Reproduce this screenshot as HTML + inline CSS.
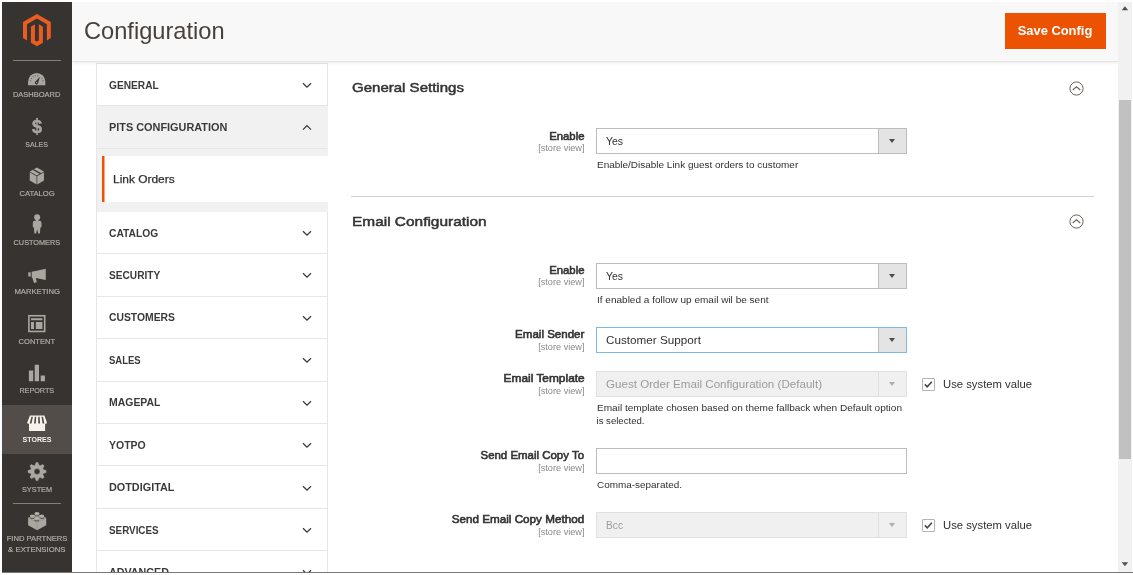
<!DOCTYPE html>
<html lang="en">
<head>
<meta charset="utf-8">
<title>Configuration</title>
<style>
*{box-sizing:border-box;margin:0;padding:0}
html,body{width:1133px;height:575px;overflow:hidden;background:#fff}
body{font-family:"Liberation Sans",sans-serif;color:#303030;position:relative}
.abs{position:absolute;white-space:nowrap}
#frame{position:absolute;left:2px;top:2px;width:1129.9px;height:570px;overflow:hidden;background:#fff;will-change:transform}
#bottomline{position:absolute;left:2px;top:572px;width:1131px;height:1px;background:#777}
#menu{position:absolute;left:0;top:0;width:70px;height:570px;background:#373330}
.msep{position:absolute;left:11px;width:48px;height:1px;background:#857f79}
.mi{position:absolute;left:0;width:70px;height:49px}
.mi.act{background:#524d49}
.ml{position:absolute;left:0;width:70px;text-align:center;font-size:7.8px;color:#b0aca6;line-height:10px;white-space:nowrap;-webkit-text-stroke:.2px #b0aca6}
.ml.act{color:#f7f3eb;font-weight:700;-webkit-text-stroke:0}
#hdr{position:absolute;left:70px;top:0;width:1046px;height:60px;background:#f8f8f8;border-bottom:1px solid #e6e6e6;box-shadow:0 1px 3px rgba(0,0,0,.09)}
#title{left:82px;top:15.4px;font-size:23.2px;line-height:28px;color:#4a403a}
#save{position:absolute;left:1003px;top:11px;width:101px;height:36px;background:#eb5202;color:#fff;font-weight:700;font-size:12.8px;line-height:36px;text-align:center;padding-right:1.8px}
#tabs{position:absolute;left:93.6px;top:60.8px;width:232.4px;height:520px;border:1px solid #e6e6e6;border-bottom:0;background:#fff}
.tab{position:absolute;left:0;width:230.4px;height:42.45px;border-bottom:1px solid #e6e6e6}
.tab b{position:absolute;left:12.3px;top:.8px;line-height:41px;font-size:11.2px;font-weight:700;color:#3a3a3a;white-space:nowrap}
.tab svg{position:absolute;left:205.4px;top:18.1px}
.tabact{background:#f1f1f1}
#lo{position:absolute;left:5.4px;top:91.9px;width:228px;height:46px;background:#fff}
#lo svg{position:absolute;left:0;top:0}
#lo>span{position:absolute;left:11.3px;top:0;line-height:46px;font-size:11.2px;color:#303030;white-space:nowrap;-webkit-text-stroke:.25px #303030}
.h2{font-size:13.6px;font-weight:400;color:#333;line-height:18px;-webkit-text-stroke:.5px #333}
.hr{position:absolute;left:349px;width:743px;height:1px;background:#d2d2d2}
.lbl{position:absolute;right:547.6px;text-align:right;white-space:nowrap;font-size:11.4px;font-weight:400;line-height:14px;color:#333;-webkit-text-stroke:.6px #333}
.sv{position:absolute;right:547.6px;text-align:right;white-space:nowrap;font-size:8.8px;line-height:10px;color:#8a8a8a}
.sel{position:absolute;left:594px;width:311px;height:26px;border:1px solid #bcbcbc;background:#fff;font-size:11.2px;line-height:25px;padding-left:9px;color:#303030;white-space:nowrap}
.sel i{position:absolute;right:0;top:0;width:28px;height:24px;background:#e4e4e4;border-left:1px solid #bcbcbc}
.sel i:after{content:"";position:absolute;left:10px;top:10px;border:3.5px solid transparent;border-top:4.5px solid #514943;border-bottom:0}
.sel.foc{border-color:#7ab9ec}
.sel.dis{background:#f0f0f0;border-color:#e0e0e0;color:#9b9b9b}
.sel.dis i{background:#f0f0f0;border-left-color:#e0e0e0}
.sel.dis i:after{border-top-color:#b0adaa}
.note{position:absolute;left:594.5px;font-size:9.6px;line-height:13px;color:#303030;white-space:nowrap}
.cb{position:absolute;left:920px;width:13px;height:13px;border:1px solid #b4b4b4;border-radius:1px;background:#fff}
.cb svg{position:absolute;left:0;top:0}
.cbl{position:absolute;left:940.5px;font-size:11.2px;line-height:14px;color:#303030;white-space:nowrap}
.col{position:absolute;left:1066.7px;width:15px;height:15px}
#sb{position:absolute;left:1116.2px;top:0;width:13.7px;height:570px;background:#f1f1f1}
#sb .th{position:absolute;left:.7px;top:97.6px;width:12.5px;height:359px;background:#c1c1c1}
#sb svg{position:absolute;left:0;top:0}
</style>
</head>
<body>
<div id="frame">
  <div id="tabs">
    <div class="tabact" style="position:absolute;left:0;top:42.45px;width:231px;height:105.55px"></div>
    <div class="tab" style="top:0.00px"><b><span style="display:inline-block;transform:scaleX(0.9085);transform-origin:left center">GENERAL</span></b><svg width="10" height="7" viewBox="0 0 10 7"><path d="M1 1.2 L5 5.2 L9 1.2" fill="none" stroke="#41362f" stroke-width="1.3"/></svg></div>
    <div class="tab" style="top:42.45px"><b><span style="display:inline-block;transform:scaleX(0.9728);transform-origin:left center">PITS CONFIGURATION</span></b><svg width="10" height="7" viewBox="0 0 10 7"><path d="M1 5.6 L5 1.6 L9 5.6" fill="none" stroke="#41362f" stroke-width="1.3"/></svg></div>
    <div class="tab" style="top:148.00px"><b><span style="display:inline-block;transform:scaleX(0.9188);transform-origin:left center">CATALOG</span></b><svg width="10" height="7" viewBox="0 0 10 7"><path d="M1 1.2 L5 5.2 L9 1.2" fill="none" stroke="#41362f" stroke-width="1.3"/></svg></div>
    <div class="tab" style="top:190.45px"><b><span style="display:inline-block;transform:scaleX(0.9049);transform-origin:left center">SECURITY</span></b><svg width="10" height="7" viewBox="0 0 10 7"><path d="M1 1.2 L5 5.2 L9 1.2" fill="none" stroke="#41362f" stroke-width="1.3"/></svg></div>
    <div class="tab" style="top:232.90px"><b><span style="display:inline-block;transform:scaleX(0.9259);transform-origin:left center">CUSTOMERS</span></b><svg width="10" height="7" viewBox="0 0 10 7"><path d="M1 1.2 L5 5.2 L9 1.2" fill="none" stroke="#41362f" stroke-width="1.3"/></svg></div>
    <div class="tab" style="top:275.35px"><b><span style="display:inline-block;transform:scaleX(0.8496);transform-origin:left center">SALES</span></b><svg width="10" height="7" viewBox="0 0 10 7"><path d="M1 1.2 L5 5.2 L9 1.2" fill="none" stroke="#41362f" stroke-width="1.3"/></svg></div>
    <div class="tab" style="top:317.80px"><b><span style="display:inline-block;transform:scaleX(0.9345);transform-origin:left center">MAGEPAL</span></b><svg width="10" height="7" viewBox="0 0 10 7"><path d="M1 1.2 L5 5.2 L9 1.2" fill="none" stroke="#41362f" stroke-width="1.3"/></svg></div>
    <div class="tab" style="top:360.25px"><b><span style="display:inline-block;transform:scaleX(0.9369);transform-origin:left center">YOTPO</span></b><svg width="10" height="7" viewBox="0 0 10 7"><path d="M1 1.2 L5 5.2 L9 1.2" fill="none" stroke="#41362f" stroke-width="1.3"/></svg></div>
    <div class="tab" style="top:402.70px"><b><span style="display:inline-block;transform:scaleX(0.9684);transform-origin:left center">DOTDIGITAL</span></b><svg width="10" height="7" viewBox="0 0 10 7"><path d="M1 1.2 L5 5.2 L9 1.2" fill="none" stroke="#41362f" stroke-width="1.3"/></svg></div>
    <div class="tab" style="top:445.15px"><b><span style="display:inline-block;transform:scaleX(0.8798);transform-origin:left center">SERVICES</span></b><svg width="10" height="7" viewBox="0 0 10 7"><path d="M1 1.2 L5 5.2 L9 1.2" fill="none" stroke="#41362f" stroke-width="1.3"/></svg></div>
    <div class="tab" style="top:487.60px"><b><span style="display:inline-block;transform:scaleX(0.9588);transform-origin:left center">ADVANCED</span></b><svg width="10" height="7" viewBox="0 0 10 7"><path d="M1 1.2 L5 5.2 L9 1.2" fill="none" stroke="#41362f" stroke-width="1.3"/></svg></div>
    <div id="lo"><svg width="4" height="46" viewBox="0 0 4 46"><rect x="0" y="0" width="2.5" height="46" fill="#eb5202"/></svg><span><span style="display:inline-block;transform:scaleX(1.0652);transform-origin:left center">Link Orders</span></span></div>
  </div>
  <div id="main">
    <div class="abs h2" style="left:349.7px;top:77px"><span style="display:inline-block;transform:scaleX(1.1050);transform-origin:left center">General Settings</span></div>
    <svg class="col" style="top:78.8px" viewBox="0 0 15 15"><circle cx="7.5" cy="7.5" r="6.6" fill="#fff" stroke="#6a635d" stroke-width="1"/><path d="M3.7 9 L7.5 5.8 L11.3 9" fill="none" stroke="#6a635d" stroke-width="1.1"/></svg>
    <div class="lbl" style="top:126.5px"><span style="display:inline-block;transform:scaleX(0.9952);transform-origin:right center">Enable</span></div>
    <div class="sv" style="top:140.9px"><span style="display:inline-block;transform:scaleX(1.0404);transform-origin:right center">[store view]</span></div>
    <div class="sel " style="top:126.3px"><span style="display:inline-block;transform:scaleX(0.9315);transform-origin:left center">Yes</span><i></i></div>
    <div class="note" style="top:156.3px"><span style="display:inline-block;transform:scaleX(1.0394);transform-origin:left center">Enable/Disable Link guest orders to customer</span></div>
    <div class="hr" style="top:194px"></div>
    <div class="abs h2" style="left:349.7px;top:210.5px"><span style="display:inline-block;transform:scaleX(1.1345);transform-origin:left center">Email Configuration</span></div>
    <svg class="col" style="top:211.8px" viewBox="0 0 15 15"><circle cx="7.5" cy="7.5" r="6.6" fill="#fff" stroke="#6a635d" stroke-width="1"/><path d="M3.7 9 L7.5 5.8 L11.3 9" fill="none" stroke="#6a635d" stroke-width="1.1"/></svg>
    <div class="lbl" style="top:261.0px"><span style="display:inline-block;transform:scaleX(0.9952);transform-origin:right center">Enable</span></div>
    <div class="sv" style="top:275.4px"><span style="display:inline-block;transform:scaleX(1.0404);transform-origin:right center">[store view]</span></div>
    <div class="sel " style="top:260.8px"><span style="display:inline-block;transform:scaleX(0.9315);transform-origin:left center">Yes</span><i></i></div>
    <div class="note" style="top:290.8px"><span style="display:inline-block;transform:scaleX(1.0440);transform-origin:left center">If enabled a follow up email wil be sent</span></div>
    <div class="lbl" style="top:325.1px"><span style="display:inline-block;transform:scaleX(1.0133);transform-origin:right center">Email Sender</span></div>
    <div class="sv" style="top:339.5px"><span style="display:inline-block;transform:scaleX(1.0404);transform-origin:right center">[store view]</span></div>
    <div class="sel foc" style="top:324.9px"><span style="display:inline-block;transform:scaleX(1.0463);transform-origin:left center">Customer Support</span><i></i></div>
    <div class="lbl" style="top:369.2px"><span style="display:inline-block;transform:scaleX(1.0441);transform-origin:right center">Email Template</span></div>
    <div class="sv" style="top:383.6px"><span style="display:inline-block;transform:scaleX(1.0404);transform-origin:right center">[store view]</span></div>
    <div class="sel dis" style="top:369.0px"><span style="display:inline-block;transform:scaleX(1.0370);transform-origin:left center">Guest Order Email Configuration (Default)</span><i></i></div>
    <div class="note" style="top:399.0px"><span style="display:inline-block;transform:scaleX(1.0474);transform-origin:left center">Email template chosen based on theme fallback when Default option</span></div>
    <div class="note" style="top:412.2px"><span style="display:inline-block;transform:scaleX(1.0000);transform-origin:left center">is selected.</span></div>
    <div class="cb" style="top:376.0px"><svg width="10.5" height="10.5" viewBox="0 0 10 10"><path d="M1.8 5.2 L4 7.4 L8.4 2.6" fill="none" stroke="#514943" stroke-width="1.6"/></svg></div>
    <div class="cbl" style="top:375.0px"><span style="display:inline-block;transform:scaleX(1.0091);transform-origin:left center">Use system value</span></div>
    <div class="lbl" style="top:446.4px"><span style="display:inline-block;transform:scaleX(1.0049);transform-origin:right center">Send Email Copy To</span></div>
    <div class="sv" style="top:460.8px"><span style="display:inline-block;transform:scaleX(1.0404);transform-origin:right center">[store view]</span></div>
    <div class="sel inp" style="top:446.2px"></div>
    <div class="note" style="top:476.2px"><span style="display:inline-block;transform:scaleX(1.0350);transform-origin:left center">Comma-separated.</span></div>
    <div class="lbl" style="top:510.4px"><span style="display:inline-block;transform:scaleX(1.0258);transform-origin:right center">Send Email Copy Method</span></div>
    <div class="sv" style="top:524.8px"><span style="display:inline-block;transform:scaleX(1.0404);transform-origin:right center">[store view]</span></div>
    <div class="sel dis" style="top:510.2px"><span style="display:inline-block;transform:scaleX(0.9112);transform-origin:left center">Bcc</span><i></i></div>
    <div class="cb" style="top:517.2px"><svg width="10.5" height="10.5" viewBox="0 0 10 10"><path d="M1.8 5.2 L4 7.4 L8.4 2.6" fill="none" stroke="#514943" stroke-width="1.6"/></svg></div>
    <div class="cbl" style="top:516.2px"><span style="display:inline-block;transform:scaleX(1.0091);transform-origin:left center">Use system value</span></div>
  </div>
  <div id="hdr"></div>
  <div id="title" class="abs"><span style="display:inline-block;transform:scaleX(1.0193);transform-origin:left center">Configuration</span></div>
  <div id="save"><span style="display:inline-block;transform:scaleX(1.0087);transform-origin:center center">Save Config</span></div>
  <div id="menu">
    <div class="mi act" style="top:402.5px;height:49.5px"></div>
    <svg style="position:absolute;left:0;top:0" width="70" height="570" viewBox="2 2 70 570">
    <g transform="translate(23,14) scale(0.933)" fill="#eb5c20"><path d="M14.9 0 L0 8.6 v17.2 l4.3 2.5 V11.1 l10.6-6.2 10.7 6.2 v17.2 l4.2-2.5 V8.6 z"/><path d="M17 28.3 l-2.1 1.2 -2.1-1.2 V11.1 l-4.3 2.5 v17.2 l6.4 3.7 6.4-3.7 V13.6 l-4.3-2.5 z"/></g>
    <path d="M28.05 85.3 V81.7 A8.65 8.65 0 0 1 45.35 81.7 V85.3 Z" fill="#aaa6a0"/>
    <path d="M39.9 76.8 L38.0 83.3 A1.6 1.6 0 1 1 35.3 81.7 Z" fill="#373330"/><circle cx="36.6" cy="82.6" r="0.55" fill="#aaa6a0"/>
    <path d="M31.09 80.91 L29.90 80.70 M31.92 78.80 L30.91 78.14 M33.43 77.23 L32.74 76.25 M35.42 76.35 L35.15 75.18 M37.69 76.29 L37.90 75.10 M41.48 78.80 L42.49 78.14 M42.31 80.91 L43.50 80.70" stroke="#373330" stroke-width="0.8" fill="none" opacity=".75"/>
    <text x="37" y="133.2" text-anchor="middle" font-family="Liberation Sans, sans-serif" font-weight="700" font-size="18" fill="#aaa6a0" stroke="#aaa6a0" stroke-width=".45">$</text><rect x="36.15" y="117.9" width="1.7" height="2.4" fill="#aaa6a0"/><rect x="34" y="135.1" width="6" height="2.5" fill="#373330"/>
    <path d="M36.9 167.6 L43.95 171.55 L36.9 175.5 L29.75 171.55 Z M29.75 172.35 L36.55 176.15 V184.4 L29.75 180.4 Z M37.25 176.15 L43.95 172.35 V180.4 L37.25 184.4 Z" fill="#aaa6a0"/><path d="M33.2 169.5 L40.6 173.6" stroke="#373330" stroke-width="1.3" fill="none"/>
    <circle cx="37.15" cy="217.3" r="3.0" fill="#aaa6a0"/><rect x="35.9" y="219.6" width="2.5" height="1.6" fill="#aaa6a0"/>
    <path d="M34.7 220.8 H39.6 Q41.5 220.9 41.5 222.8 V226.6 Q41.5 227.5 40.4 227.5 L39.9 233.5 H38.2 L37.15 229.2 L36.1 233.5 H34.4 L33.9 227.5 Q32.8 227.5 32.8 226.6 V222.8 Q32.8 220.9 34.7 220.8 Z" fill="#aaa6a0"/>
    <path d="M31.7 271.7 L35.5 271.1 L45.75 268.8 V279.9 L35.8 278 L36.8 282.3 L34.1 283.1 L32.3 277.8 L31.7 277.7 Z M28.3 272.3 H30.7 V276.5 H28.3 Z" fill="#aaa6a0"/>
    <rect x="28.9" y="315.75" width="15.8" height="15.7" fill="none" stroke="#aaa6a0" stroke-width="1.6"/>
    <path d="M31 318.2 H42.4 V320.3 H31 Z M31 322 H34 V329 H31 Z M35.8 322 H42.4 V329 H35.8 Z" fill="#aaa6a0"/>
    <path d="M28.9 370.4 H33.2 V381.3 H28.9 Z M34.7 364.7 H39 V381.3 H34.7 Z M40.7 375.4 H44.9 V381.3 H40.7 Z" fill="#aaa6a0"/>
    <path d="M30 415.4 H44.4 L46.9 422.5 Q46.9 423.7 45.7 423.7 H28.4 Q27.2 423.7 27.2 422.5 Z M29 423.6 H45.1 V431 H29 Z" fill="#f7f3eb"/>
    <path d="M31.39 416.8 L32.88 416.8 L31.59 423.2 Q30.68 424.09999999999997 29.77 423.2 Z M34.77 416.8 L36.26 416.8 L35.84 423.2 Q34.93 424.09999999999997 34.02 423.2 Z M38.14 416.8 L39.63 416.8 L40.08 423.2 Q39.17 424.09999999999997 38.26 423.2 Z M41.52 416.8 L43.01 416.8 L44.33 423.2 Q43.42 424.09999999999997 42.51 423.2 Z" fill="#524d49"/>
    <path d="M35.07 465.36 L36.10 462.50 L38.00 462.50 L39.03 465.36 L40.03 465.77 L42.77 464.48 L44.12 465.83 L42.83 468.57 L43.24 469.57 L46.10 470.60 L46.10 472.50 L43.24 473.53 L42.83 474.53 L44.12 477.27 L42.77 478.62 L40.03 477.33 L39.03 477.74 L38.00 480.60 L36.10 480.60 L35.07 477.74 L34.07 477.33 L31.33 478.62 L29.98 477.27 L31.27 474.53 L30.86 473.53 L28.00 472.50 L28.00 470.60 L30.86 469.57 L31.27 468.57 L29.98 465.83 L31.33 464.48 L34.07 465.77 Z M40.05 471.55 A3.0 3.0 0 1 0 34.05 471.55 A3.0 3.0 0 1 0 40.05 471.55 Z" fill="#aaa6a0" fill-rule="evenodd" stroke="#aaa6a0" stroke-width=".5" stroke-linejoin="round"/>
    <path d="M28.1 517.8 L37.15 513.9 L46.2 517.8 V525.3 L37.15 530.2 L28.1 525.3 Z" fill="#aaa6a0"/>
    <path d="M28.1 517.9 L37.15 522.3 L46.2 517.9 M37.15 522.3 V530.2" fill="none" stroke="#8f8b85" stroke-width="0.55"/>
    <ellipse cx="36.95" cy="515.2" rx="2.5" ry="1.2" fill="#5c5853"/><path d="M34.650000000000006 513.25 V514.3 A2.3 1.1 0 0 0 39.25 514.3 V513.25 A2.3 1.1 0 0 0 34.650000000000006 513.25 Z" fill="#aaa6a0"/><ellipse cx="36.95" cy="513.25" rx="2.3" ry="1.1" fill="#b3afa9"/>
    <ellipse cx="32.3" cy="517.7" rx="2.5" ry="1.2" fill="#5c5853"/><path d="M29.999999999999996 515.75 V516.8 A2.3 1.1 0 0 0 34.599999999999994 516.8 V515.75 A2.3 1.1 0 0 0 29.999999999999996 515.75 Z" fill="#aaa6a0"/><ellipse cx="32.3" cy="515.75" rx="2.3" ry="1.1" fill="#b3afa9"/>
    <ellipse cx="41.8" cy="517.7" rx="2.5" ry="1.2" fill="#5c5853"/><path d="M39.5 515.75 V516.8 A2.3 1.1 0 0 0 44.099999999999994 516.8 V515.75 A2.3 1.1 0 0 0 39.5 515.75 Z" fill="#aaa6a0"/><ellipse cx="41.8" cy="515.75" rx="2.3" ry="1.1" fill="#b3afa9"/>
    <ellipse cx="36.8" cy="520.25" rx="2.5" ry="1.2" fill="#5c5853"/><path d="M34.5 518.3 V519.3499999999999 A2.3 1.1 0 0 0 39.099999999999994 519.3499999999999 V518.3 A2.3 1.1 0 0 0 34.5 518.3 Z" fill="#aaa6a0"/><ellipse cx="36.8" cy="518.3" rx="2.3" ry="1.1" fill="#b3afa9"/>
    </svg>
    <div class="msep" style="top:58px"></div>
    <div class="msep" style="top:501px"></div>
    <div class="ml" style="top:87.9px"><span style="display:inline-block;transform:scaleX(0.9617);transform-origin:center center">DASHBOARD</span></div>
    <div class="ml" style="top:137.7px"><span style="display:inline-block;transform:scaleX(0.8910);transform-origin:center center">SALES</span></div>
    <div class="ml" style="top:186.9px"><span style="display:inline-block;transform:scaleX(0.9776);transform-origin:center center">CATALOG</span></div>
    <div class="ml" style="top:236.0px"><span style="display:inline-block;transform:scaleX(0.9358);transform-origin:center center">CUSTOMERS</span></div>
    <div class="ml" style="top:285.4px"><span style="display:inline-block;transform:scaleX(0.9836);transform-origin:center center">MARKETING</span></div>
    <div class="ml" style="top:335.2px"><span style="display:inline-block;transform:scaleX(0.9685);transform-origin:center center">CONTENT</span></div>
    <div class="ml" style="top:384.0px"><span style="display:inline-block;transform:scaleX(0.9265);transform-origin:center center">REPORTS</span></div>
    <div class="ml act" style="top:433.3px"><span style="display:inline-block;transform:scaleX(0.9085);transform-origin:center center">STORES</span></div>
    <div class="ml" style="top:482.7px"><span style="display:inline-block;transform:scaleX(0.9419);transform-origin:center center">SYSTEM</span></div>
    <div class="ml" style="top:531.9px"><span style="display:inline-block;transform:scaleX(0.9776);transform-origin:center center">FIND PARTNERS</span></div>
    <div class="ml" style="top:542.6px"><span style="display:inline-block;transform:scaleX(0.9961);transform-origin:center center">&amp; EXTENSIONS</span></div>
  </div>
  <div id="sb"><div class="th"></div><svg width="13.7" height="570" viewBox="0 0 13.7 570"><path d="M3.7 8 L6.95 4 L10.2 8 Z M3.7 560.4 L6.95 564.4 L10.2 560.4 Z" fill="#505050"/></svg></div>
</div>
<div id="bottomline"></div>
</body>
</html>
